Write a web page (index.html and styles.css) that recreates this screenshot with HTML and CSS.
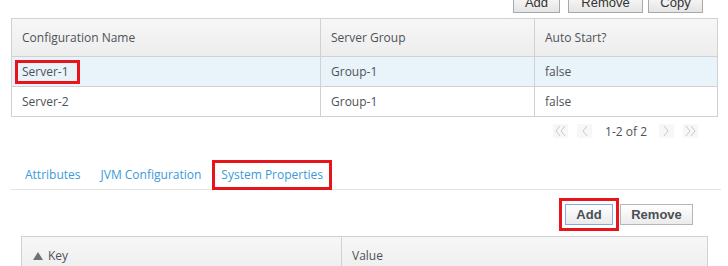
FILE: index.html
```html
<!DOCTYPE html>
<html>
<head>
<meta charset="utf-8">
<link rel="stylesheet" href="styles.css">
</head>
<body>
<div class="top-actions">
  <button class="btn btn-add">Add</button>
  <button class="btn btn-remove">Remove</button>
  <button class="btn btn-copy">Copy</button>
</div>

<div class="grid">
  <div class="row head">
    <div class="cell">Configuration Name</div>
    <div class="cell">Server Group</div>
    <div class="cell">Auto Start?</div>
  </div>
  <div class="row selected">
    <div class="cell"><span class="mark">Server-1</span></div>
    <div class="cell">Group-1</div>
    <div class="cell">false</div>
  </div>
  <div class="row last">
    <div class="cell">Server-2</div>
    <div class="cell">Group-1</div>
    <div class="cell">false</div>
  </div>
</div>

<div class="pager">
  <span class="pg-btn"><svg width="15" height="14" viewBox="0 0 15 14"><path d="M7 2 L3 7 L7 12 M12 2 L8 7 L12 12" fill="none" stroke="#c9c9c9" stroke-width="1"/></svg></span>
  <span class="pg-btn"><svg width="15" height="14" viewBox="0 0 15 14"><path d="M10 2 L6 7 L10 12" fill="none" stroke="#c9c9c9" stroke-width="1"/></svg></span>
  <span class="pg-text">1-2 of 2</span>
  <span class="pg-btn"><svg width="15" height="14" viewBox="0 0 15 14"><path d="M5 2 L9 7 L5 12" fill="none" stroke="#c9c9c9" stroke-width="1"/></svg></span>
  <span class="pg-btn"><svg width="15" height="14" viewBox="0 0 15 14"><path d="M3 2 L7 7 L3 12 M8 2 L12 7 L8 12" fill="none" stroke="#c9c9c9" stroke-width="1"/></svg></span>
</div>

<div class="tabs">
  <span class="tab">Attributes</span>
  <span class="tab">JVM Configuration</span>
  <span class="tab active">System Properties</span>
</div>

<div class="sub-actions">
  <button class="btn btn-bold focused">Add</button>
  <button class="btn btn-bold">Remove</button>
</div>

<div class="props">
  <div class="prow">
    <div class="pcell"><svg class="sort" width="10" height="8" viewBox="0 0 10 8"><path d="M0 8 L5 0 L10 8 Z" fill="#6e7276"/></svg>Key</div>
    <div class="pcell">Value</div>
  </div>
</div>
</body>
</html>
```

FILE: styles.css
```css
html, body {
  margin: 0;
  padding: 0;
  background: #ffffff;
  overflow: hidden;
}
body {
  width: 728px;
  height: 266px;
  font-family: "Open Sans", "DejaVu Sans", sans-serif;
  font-size: 12px;
  color: #4d5258;
}

.btn {
  box-sizing: border-box;
  font-family: "Liberation Sans", Arial, sans-serif;
  font-size: 13px;
  color: #333;
  background: linear-gradient(#ffffff, #e4e4e4);
  border: 1px solid #a9a9a9;
  border-radius: 0;
  padding: 0;
  margin: 0;
  height: 22px;
}

.top-actions {
  display: flex;
  justify-content: flex-end;
  margin-top: -9px;
  padding-right: 25px;
  height: 22px;
}
.top-actions .btn-add { width: 47px; margin-right: 8px; }
.top-actions .btn-remove { width: 75px; margin-right: 5px; }
.top-actions .btn-copy { width: 55px; }

.grid {
  margin: 5px 0 0 11px;
  width: 707px;
  box-sizing: border-box;
  border: 1px solid #d1d1d1;
}
.row {
  display: grid;
  grid-template-columns: 309px 214px 1fr;
  height: 30px;
  border-bottom: 1px solid #d1d1d1;
}
.row.head {
  height: 37px;
  background: linear-gradient(#f7f7f7, #ededed);
}
.row.selected { height: 29px; background: #e9f3fa; }
.row.last { height: 29px; border-bottom: none; }
.cell {
  display: flex;
  align-items: center;
  padding-left: 10px;
  border-right: 1px solid #d1d1d1;
}
.cell:last-child { border-right: none; }

.mark {
  display: inline-block;
  border: 3px solid #e8141c;
  padding: 1px 8px 1px 4px;
  margin-left: -7px;
  line-height: 16px;
}

.pager {
  display: flex;
  justify-content: flex-end;
  align-items: center;
  height: 16px;
  margin-top: 6px;
  padding-right: 30px;
  gap: 9px;
}
.pg-btn {
  display: inline-flex;
  width: 15px;
  height: 14px;
  background: #f7f7f7;
}
.pg-text {
  margin: 0 3px 0 4px;
  color: #4d5258;
}

.tabs {
  display: flex;
  margin: 21px 0 0 11px;
  width: 706px;
  height: 29px;
  padding-left: 4px;
  box-sizing: content-box;
  border-bottom: 1px solid #e3e3e3;
}
.tab {
  display: flex;
  align-items: center;
  padding: 0 10px;
  color: #3a9ad9;
  height: 29px;
}
.tab.active {
  box-sizing: border-box;
  height: 30px;
  padding: 0 6px 1px 6px;
  border: 3px solid #e8141c;
  margin-left: 1px;
}

.sub-actions {
  display: flex;
  justify-content: flex-end;
  margin-top: 14px;
  padding-right: 35px;
  height: 21px;
}
.btn-bold {
  font-weight: bold;
  height: 21px;
  color: #4a4f55;
  background: linear-gradient(#ffffff, #ebebeb);
  border-color: #b5b5b5;
}
.sub-actions .btn-bold { width: 73px; }
.sub-actions .focused {
  width: 48px;
  margin-right: 7px;
  border-color: #84ace0;
  outline: 3px solid #e8141c;
  outline-offset: 3px;
}

.props {
  margin: 11px 0 0 21px;
  width: 687px;
  box-sizing: border-box;
  border: 1px solid #d1d1d1;
}
.prow {
  display: grid;
  grid-template-columns: 320px 1fr;
  height: 37px;
  background: linear-gradient(#f7f7f7, #ededed);
}
.pcell {
  display: flex;
  align-items: center;
  padding-left: 10px;
  border-right: 1px solid #d1d1d1;
}
.pcell:last-child { border-right: none; }
.sort {
  margin: 0 5px 0 1px;
}
```
